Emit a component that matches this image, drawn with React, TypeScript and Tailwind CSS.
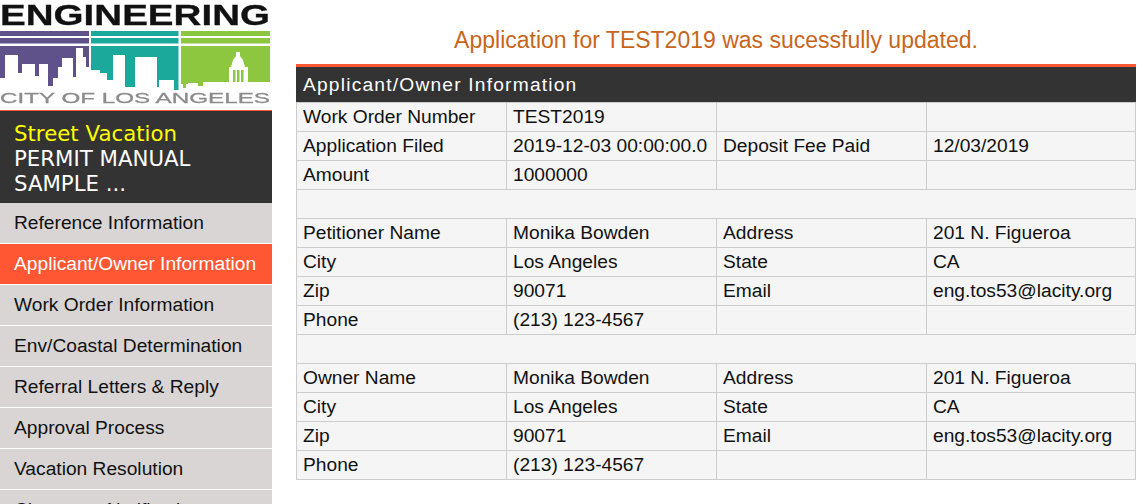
const menuItems = [
  'Reference Information',
  'Applicant/Owner Information',
  'Work Order Information',
  'Env/Coastal Determination',
  'Referral Letters & Reply',
  'Approval Process',
  'Vacation Resolution',
  'Clearance Notification',
]

const rows = [
  ['Work Order Number', 'TEST2019', '', ''],
  ['Application Filed', '2019-12-03 00:00:00.0', 'Deposit Fee Paid', '12/03/2019'],
  ['Amount', '1000000', '', ''],
  null,
  ['Petitioner Name', 'Monika Bowden', 'Address', '201 N. Figueroa'],
  ['City', 'Los Angeles', 'State', 'CA'],
  ['Zip', '90071', 'Email', 'eng.tos53@lacity.org'],
  ['Phone', '(213) 123-4567', '', ''],
  null,
  ['Owner Name', 'Monika Bowden', 'Address', '201 N. Figueroa'],
  ['City', 'Los Angeles', 'State', 'CA'],
  ['Zip', '90071', 'Email', 'eng.tos53@lacity.org'],
  ['Phone', '(213) 123-4567', '', ''],
]

function Logo() {
  return (
    <svg width="272" height="110" viewBox="0 0 272 110" className="block blur-[0.4px]">
      <text
        x="0"
        y="25"
        fontFamily="Liberation Sans, sans-serif"
        fontWeight="700"
        fontSize="30"
        textLength="270"
        lengthAdjust="spacingAndGlyphs"
        fill="#111111"
        stroke="#111111"
        strokeWidth="0.3"
      >
        ENGINEERING
      </text>
      <g fill="#5f5189">
        <rect x="0" y="31" width="89" height="5" />
        <rect x="0" y="38" width="89" height="5.5" />
        <path d="M0 46H89V67H86V57H83V48H76V77H73V58H62V67H58V78H53V86H48V64H39V76H35V64H22V73H18V55H5V78H0Z" />
      </g>
      <g fill="#1aa99a">
        <rect x="91" y="31" width="87.5" height="5" />
        <rect x="91" y="38" width="87.5" height="5.5" />
        <path d="M91 46H178.500V90H174V80H159V87H157V57H135V87H125V55H113V80H107V73H100V70H91Z" />
      </g>
      <g fill="#8dc63f">
        <rect x="181" y="31" width="89" height="5" />
        <rect x="181" y="38" width="89" height="5.5" />
        <path d="M181 46H270V82H248V67H245L243 60L240 56V52H236V56L233 60L231 67H229V82H203V86H198V83H188V84H186V88H183V84H181Z" />
        <path d="M233 70H235.500V82H233ZM237 70H239.500V82H237ZM241 70H243.500V82H241Z" />
      </g>
      <text
        x="0"
        y="103"
        fontFamily="Liberation Sans, sans-serif"
        fontSize="15"
        textLength="270"
        lengthAdjust="spacingAndGlyphs"
        fill="#8c8c8c"
        stroke="#8c8c8c"
        strokeWidth="0.3"
      >
        CITY OF LOS ANGELES
      </text>
    </svg>
  )
}

export default function App() {
  return (
    <div className="flex h-[504px] overflow-hidden bg-white font-['Liberation_Sans',Arial,sans-serif] text-[19.2px] text-[#111]">
      <aside className="w-[272px] shrink-0">
        <Logo />
        <div className="h-[93px] border-t-[1px] border-[#ff5733] bg-[#333333] px-[14px] pt-[10px] font-['DejaVu_Sans',sans-serif] text-[21.3px] leading-[25px] text-white">
          <div className="text-[#ffff00]">Street Vacation</div>
          <div>PERMIT MANUAL</div>
          <div>SAMPLE ...</div>
        </div>
        <nav className="flex flex-col gap-px">
          {menuItems.map((item) => (
            <div
              key={item}
              className={
                item === 'Applicant/Owner Information'
                  ? 'h-[40px] shrink-0 bg-[#ff5733] px-[14px] leading-[39px] text-white'
                  : 'h-[40px] shrink-0 bg-[#d9d5d5] px-[14px] leading-[39px] text-[#111]'
              }
            >
              {item}
            </div>
          ))}
        </nav>
      </aside>

      <main className="ml-[24px] w-[840px] shrink-0">
        <div className="flex h-[64px] items-end justify-center pb-[11px] text-[23px] leading-[26px] text-[#c8651b]">
          Application for TEST2019 was sucessfully updated.
        </div>
        <div className="h-[38px] border-t-[3px] border-[#ff5733] bg-[#333333] px-[7px] text-[19.2px] leading-[35px] tracking-[1.2px] text-white">
          Applicant/Owner Information
        </div>
        <div className="border-l border-t border-[#cccccc] bg-[#f5f5f5]">
          {rows.map((row, i) => (
            <div key={i} className="grid h-[29px] grid-cols-[210px_210px_210px_209px] border-b border-[#cccccc]">
              {(row ?? ['', '', '', '']).map((cell, j) => (
                <div
                  key={j}
                  className={
                    row
                      ? 'whitespace-nowrap border-r border-[#cccccc] px-[6px] leading-[28px]'
                      : 'whitespace-nowrap leading-[28px]'
                  }
                >
                  {cell}
                </div>
              ))}
            </div>
          ))}
        </div>
      </main>
    </div>
  )
}
